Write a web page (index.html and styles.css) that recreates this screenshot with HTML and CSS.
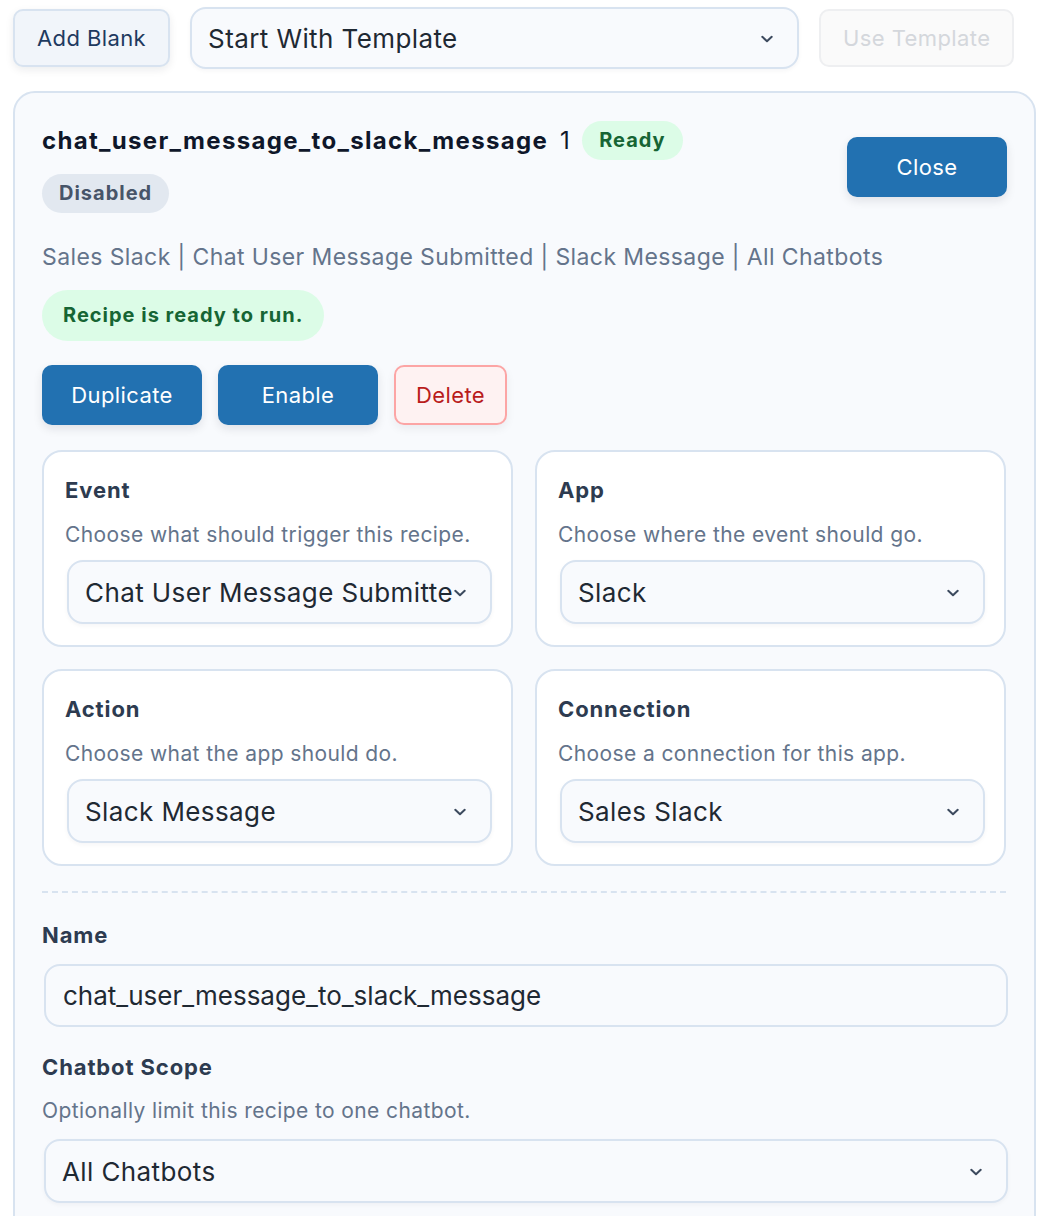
FILE: index.html
```html
<!DOCTYPE html>
<html lang="en">

<head>
    <meta charset="UTF-8">
    <meta name="viewport" content="width=device-width, initial-scale=1.0">
    <title>Recipes</title>
    <link rel="stylesheet" href="styles.css">
</head>

<body>
    <div class="toolbar">
        <button class="btn-light">Add Blank</button>
        <div class="select-wrap toolbar-select">
            <select class="select">
                <option>Start With Template</option>
            </select>
            <svg class="chevron" viewBox="0 0 14 8"><path d="M1.5 1.5 7 6.5l5.5-5"/></svg>
        </div>
        <button class="btn-light" disabled>Use Template</button>
    </div>

    <div class="recipe-card">
        <div class="recipe-header">
            <div class="recipe-title-block">
                <div class="title-row">
                    <h2 class="recipe-name">chat_user_message_to_slack_message</h2>
                    <span class="recipe-count">1</span>
                    <span class="badge badge-green">Ready</span>
                </div>
                <div class="title-row">
                    <span class="badge badge-gray">Disabled</span>
                </div>
            </div>
            <button class="btn-primary">Close</button>
        </div>

        <p class="summary">Sales Slack | Chat User Message Submitted | Slack Message | All Chatbots</p>

        <div class="notice">Recipe is ready to run.</div>

        <div class="actions">
            <button class="btn-primary">Duplicate</button>
            <button class="btn-primary">Enable</button>
            <button class="btn-danger">Delete</button>
        </div>

        <div class="step-grid">
            <div class="step">
                <h3 class="field-label">Event</h3>
                <p class="field-help">Choose what should trigger this recipe.</p>
                <div class="select-wrap">
                    <select class="select">
                        <option>Chat User Message Submitted</option>
                    </select>
                    <svg class="chevron" viewBox="0 0 14 8"><path d="M1.5 1.5 7 6.5l5.5-5"/></svg>
                </div>
            </div>
            <div class="step">
                <h3 class="field-label">App</h3>
                <p class="field-help">Choose where the event should go.</p>
                <div class="select-wrap">
                    <select class="select">
                        <option>Slack</option>
                    </select>
                    <svg class="chevron" viewBox="0 0 14 8"><path d="M1.5 1.5 7 6.5l5.5-5"/></svg>
                </div>
            </div>
            <div class="step">
                <h3 class="field-label">Action</h3>
                <p class="field-help">Choose what the app should do.</p>
                <div class="select-wrap">
                    <select class="select">
                        <option>Slack Message</option>
                    </select>
                    <svg class="chevron" viewBox="0 0 14 8"><path d="M1.5 1.5 7 6.5l5.5-5"/></svg>
                </div>
            </div>
            <div class="step">
                <h3 class="field-label">Connection</h3>
                <p class="field-help">Choose a connection for this app.</p>
                <div class="select-wrap">
                    <select class="select">
                        <option>Sales Slack</option>
                    </select>
                    <svg class="chevron" viewBox="0 0 14 8"><path d="M1.5 1.5 7 6.5l5.5-5"/></svg>
                </div>
            </div>
        </div>

        <hr class="divider">

        <div class="field">
            <h3 class="field-label">Name</h3>
            <input class="text-input" type="text" value="chat_user_message_to_slack_message">
        </div>

        <div class="field">
            <h3 class="field-label">Chatbot Scope</h3>
            <p class="field-help">Optionally limit this recipe to one chatbot.</p>
            <div class="select-wrap">
                <select class="select">
                    <option>All Chatbots</option>
                </select>
                <svg class="chevron" viewBox="0 0 14 8"><path d="M1.5 1.5 7 6.5l5.5-5"/></svg>
            </div>
        </div>
    </div>
</body>

</html>
```

FILE: styles.css
```css
/* General Page Styles */
body {
    font-family: 'Inter', 'Noto Sans', sans-serif;
    letter-spacing: 0.025em;
    background-color: #fff;
    color: #1e293b;
    margin: 0;
    padding: 7px 14px 0 13px;
}

button,
select,
input {
    font-family: inherit;
    letter-spacing: inherit;
}

h2,
h3,
p {
    margin: 0;
}

/* Top toolbar */
.toolbar {
    display: flex;
    align-items: center;
    gap: 20px;
    height: 62px;
}

.btn-light {
    height: 58px;
    padding: 0 22px;
    font-size: 22px;
    color: #1e3a5f;
    background-color: #f1f5fa;
    border: 2px solid #d8e3f0;
    border-radius: 10px;
    box-shadow: 0 3px 8px rgba(15, 23, 42, 0.08);
    cursor: pointer;
}

.btn-light:disabled {
    color: #d4d7dc;
    background-color: #fafafa;
    border-color: #eeeff1;
    box-shadow: none;
    cursor: default;
}

.toolbar-select {
    width: 609px;
}

.toolbar-select .select {
    height: 62px;
    padding-left: 16px;
}

/* Selects */
.select-wrap {
    position: relative;
}

.select {
    appearance: none;
    display: block;
    width: 100%;
    height: 64px;
    padding: 0 37px 0 16px;
    font-size: 26px;
    color: #1f2933;
    background-color: #f8fafd;
    border: 2px solid #d8e3f0;
    border-radius: 16px;
    box-shadow: 0 2px 4px rgba(15, 23, 42, 0.04);
}

.chevron {
    position: absolute;
    right: 26px;
    top: 50%;
    width: 12px;
    height: 8px;
    margin-top: -3px;
    fill: none;
    stroke: #3c4a5e;
    stroke-width: 2.4;
    stroke-linecap: round;
    stroke-linejoin: round;
    pointer-events: none;
}

/* Recipe card */
.recipe-card {
    margin-top: 22px;
    padding: 28px 27px 40px;
    background-color: #f8fafd;
    border: 2px solid #d8e3f0;
    border-radius: 22px;
}

.recipe-header {
    display: flex;
    justify-content: space-between;
    align-items: center;
}

.recipe-title-block {
    display: flex;
    flex-direction: column;
    gap: 14px;
}

.title-row {
    display: flex;
    align-items: center;
    gap: 12px;
}

.recipe-name {
    font-size: 24px;
    font-weight: 700;
    letter-spacing: 0.055em;
    color: #0f172a;
}

.recipe-count {
    font-size: 24px;
    color: #0f172a;
}

.badge {
    display: inline-block;
    height: 39px;
    line-height: 39px;
    padding: 0 17px;
    border-radius: 20px;
    font-size: 20px;
    font-weight: 700;
    letter-spacing: 0.05em;
}

.badge-green {
    background-color: #dcfce7;
    color: #166534;
}

.badge-gray {
    background-color: #e2e8f0;
    color: #475569;
}

.btn-primary {
    height: 60px;
    min-width: 160px;
    padding: 0 26px;
    font-size: 22px;
    color: #fff;
    background-color: #2271b1;
    border: none;
    border-radius: 10px;
    box-shadow: 0 4px 10px rgba(15, 23, 42, 0.1);
    cursor: pointer;
}

.btn-danger {
    height: 60px;
    padding: 0 20px;
    font-size: 22px;
    color: #b91c1c;
    background-color: #fef2f2;
    border: 2px solid #fca5a5;
    border-radius: 10px;
    box-shadow: 0 4px 10px rgba(15, 23, 42, 0.06);
    cursor: pointer;
}

.summary {
    margin-top: 28px;
    font-size: 23px;
    line-height: 32px;
    color: #64748b;
}

.notice {
    display: inline-block;
    margin-top: 17px;
    height: 51px;
    line-height: 51px;
    padding: 0 21px;
    border-radius: 26px;
    font-size: 20px;
    font-weight: 700;
    letter-spacing: 0.05em;
    color: #166534;
    background-color: #dcfce7;
}

.actions {
    display: flex;
    gap: 16px;
    margin-top: 24px;
}

/* Step grid */
.step-grid {
    display: grid;
    grid-template-columns: 1fr 1fr;
    gap: 22px;
    margin-top: 25px;
    margin-right: 1px;
}

.step {
    padding: 23px 19px 21px 21px;
    background-color: #fff;
    border: 2px solid #d8e3f0;
    border-radius: 20px;
}

.step .select-wrap {
    margin-left: 2px;
}

.field-label {
    font-size: 22px;
    line-height: 30px;
    font-weight: 700;
    letter-spacing: 0.04em;
    color: #2d3b50;
}

.field-help {
    margin-top: 16px;
    font-size: 21px;
    line-height: 28px;
    color: #64748b;
}

.field-help + .select-wrap {
    margin-top: 11px;
}

.divider {
    margin: 25px 1px 27px 0;
    border: none;
    border-top: 2px dashed #d8e3f0;
}

/* Bottom fields */
.field + .field {
    margin-top: 25px;
}

.field .field-label + .text-input {
    margin-top: 14px;
}

.field .field-help {
    margin-top: 15px;
}

.field .field-help + .select-wrap {
    margin-top: 14px;
}

.text-input {
    display: block;
    box-sizing: border-box;
    width: calc(100% - 1px);
    margin-left: 2px;
    height: 63px;
    padding: 0 17px;
    font-size: 26px;
    letter-spacing: 0;
    color: #1f2933;
    background-color: #f8fafd;
    border: 2px solid #d8e3f0;
    border-radius: 16px;
}

.field > .select-wrap {
    margin-left: 2px;
    margin-right: -1px;
}
```
